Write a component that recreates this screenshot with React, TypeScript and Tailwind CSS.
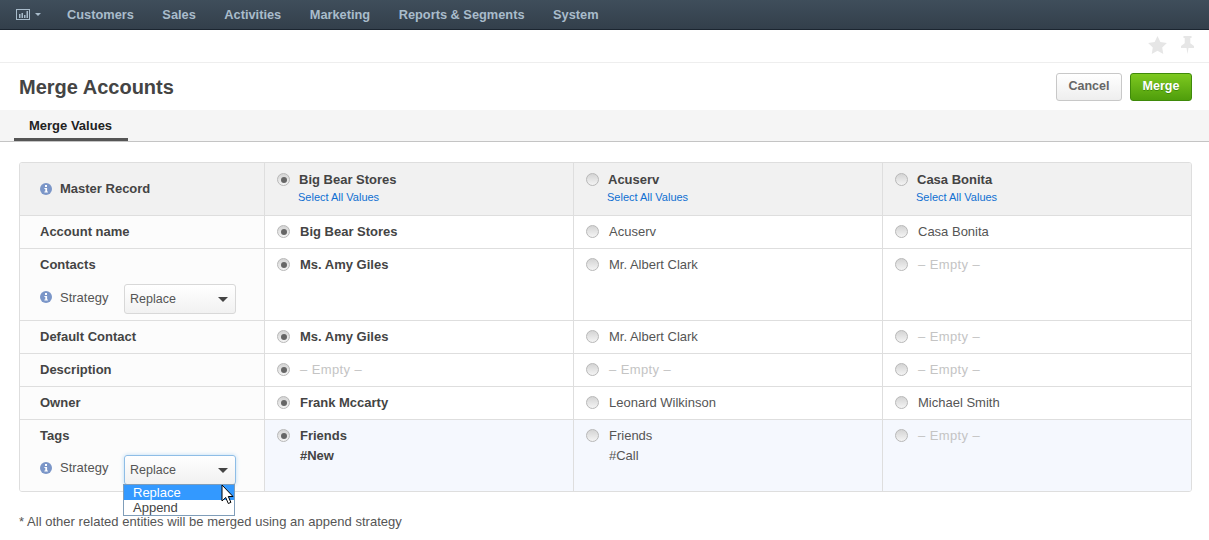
import React from 'react';

const navItems = ['Customers', 'Sales', 'Activities', 'Marketing', 'Reports & Segments', 'System'];

const Radio = ({ checked }: { checked?: boolean }) => (
  <span className="mt-[1px] flex h-[13px] w-[13px] shrink-0 items-center justify-center rounded-full border border-[#b8b8b8] bg-gradient-to-b from-[#d4d4d4] to-[#f4f4f4]">
    {checked && <span className="h-[6px] w-[6px] rounded-full bg-[#666]" />}
  </span>
);

const InfoIcon = () => (
  <svg width="12" height="12" viewBox="0 0 12 12" className="shrink-0">
    <circle cx="6" cy="6" r="6" fill="#7b96c8" />
    <rect x="5" y="2" width="2" height="2" fill="#fff" />
    <path d="M4.4 5h2.7v3.4h.8V9.5H4.4V8.4h.9V6.1h-.9z" fill="#fff" />
  </svg>
);

const Caret = () => <span className="h-0 w-0 border-x-[5px] border-t-[5px] border-x-transparent border-t-[#444]" />;

const Strategy = ({ focused }: { focused?: boolean }) => (
  <div className="mt-[9px] flex items-start pl-[20px]">
    <span className="mt-[7px]"><InfoIcon /></span>
    <span className={`ml-[8px] w-[64px] text-[#555] ${focused ? 'mt-[3px]' : 'mt-[4px]'}`}>Strategy</span>
    <div className={`flex h-[30px] w-[112px] items-center justify-between rounded-[3px] border bg-gradient-to-b from-white to-[#f1f1f1] pl-[5px] pr-[7px] text-[12.5px] text-[#555] ${focused ? 'border-[#8ebde6] shadow-[0_0_4px_#bcdcf5]' : 'border-[#d8d8d8]'}`}>
      Replace
      <Caret />
    </div>
  </div>
);

const Empty = () => <span className="tracking-[0.4px] text-[#c4c4c4]">– Empty –</span>;

interface CellProps {
  checked?: boolean;
  children: React.ReactNode;
  tint?: boolean;
  last?: boolean;
}

const Cell = ({ checked, children, tint, last }: CellProps) => (
  <div className={`flex gap-[10px] border-l border-[#dedede] pl-[12px] pt-[6px] ${tint ? 'bg-[#f5f8fe]' : ''} ${last ? '' : 'border-b'}`}>
    <span className="pt-[2px]"><Radio checked={checked} /></span>
    <div className="leading-[20px]">{children}</div>
  </div>
);

const Label = ({ children, last }: { children: React.ReactNode; last?: boolean }) => (
  <div className={`bg-[#fcfcfc] pt-[6px] leading-[20px] ${last ? '' : 'border-b border-[#dedede]'}`}>
    {children}
  </div>
);

const Head = ({ name, checked }: { name: string; checked?: boolean }) => (
  <div className="flex gap-[9px] border-b border-l border-[#dedede] bg-[#f1f1f1] pl-[12px] pt-[8px]">
    <span className="pt-[1px]"><Radio checked={checked} /></span>
    <div>
      <div className="text-[13px] font-bold leading-[18px] text-[#444]">{name}</div>
      <a className="-ml-px block text-[11px] leading-[16px] text-[#0f6fd1]">Select All Values</a>
    </div>
  </div>
);

const B = ({ children }: { children: React.ReactNode }) => <span className="font-bold text-[#444]">{children}</span>;
const P = ({ children }: { children: React.ReactNode }) => <span className="text-[#555]">{children}</span>;

export default function App() {
  return (
    <div className="relative h-[540px] w-[1209px] overflow-hidden bg-white font-['Liberation_Sans',Arial,sans-serif] text-[13px] text-[#444]">
      <nav className="flex h-[30px] items-center border-b border-[#1b2530] bg-gradient-to-b from-[#3f4e5b] to-[#333f4b] pl-[16px]">
        <svg width="14" height="13" viewBox="0 0 14 13" className="shrink-0">
          <rect x="0.5" y="1.5" width="13" height="10" fill="none" stroke="#a9bccb" />
          <path d="M3 6h1.5v4H3zM5.5 5H7v5H5.5zM8 7h1.5v3H8zM10.5 3H12v7h-1.5z" fill="#a9bccb" />
        </svg>
        <span className="ml-[5px] h-0 w-0 border-x-[3px] border-t-[3px] border-x-transparent border-t-[#a9bccb]" />
        <div className="ml-[26px] flex gap-[28.5px] text-[12.8px] font-bold text-[#a9bccb]">
          {navItems.map((item) => (
            <span key={item}>{item}</span>
          ))}
        </div>
      </nav>

      <div className="flex h-[33px] items-center justify-end gap-[14px] border-b border-[#eeeeee] pb-[2px] pr-[15px]">
        <svg width="19" height="18" viewBox="0 0 24 23"><path d="M12 0l3.7 7.6 8.3 1.2-6 5.9 1.4 8.3L12 19l-7.4 4L6 14.7 0 8.8l8.3-1.2z" fill="#e6e6e6" /></svg>
        <svg width="13" height="18" viewBox="0 0 13 18" preserveAspectRatio="none"><path d="M2.5 0h8v2H9.3v5.2L13 10v2H7.5l-1 6-1-6H0v-2l3.7-2.8V2H2.5z" fill="#e6e6e6" /></svg>
      </div>

      <div className="flex h-[47px] items-center justify-between pl-[19px] pr-[17px]">
        <h1 className="text-[20px] font-bold text-[#444]">Merge Accounts</h1>
        <div className="flex gap-[8px]">
          <button className="h-[28px] w-[66px] rounded-[3px] border border-[#c8c8c8] bg-gradient-to-b from-white to-[#eeeeee] text-[12.5px] font-bold text-[#666]">Cancel</button>
          <button className="h-[28px] w-[62px] rounded-[3px] border border-[#3f8a0a] bg-gradient-to-b from-[#7dc91f] to-[#4f9e0b] text-[12.5px] font-bold text-white [text-shadow:0_1px_0_#3f8a0a]">Merge</button>
        </div>
      </div>

      <div className="h-[32px] border-b border-[#c4c4c4] bg-[#f5f5f5] pl-[14px]">
        <div className="h-[31px] w-[114px] border-b-[3px] border-[#555] pl-[15px] pt-[8px] text-[13px] font-bold leading-[16px] text-[#222]">Merge Values</div>
      </div>

      <div className="mx-[19px] mt-[20px] grid w-[1173px] grid-cols-[244px_309px_309px_309px] grid-rows-[53px_33px_72px_33px_33px_33px_71px] overflow-hidden rounded-[3px] border border-[#dedede]">
        <div className="flex items-center gap-[8px] border-b border-[#dedede] bg-[#f1f1f1] pl-[20px] font-bold"><InfoIcon />Master Record</div>
        <Head name="Big Bear Stores" checked />
        <Head name="Acuserv" />
        <Head name="Casa Bonita" />

        <Label><span className="pl-[20px] font-bold">Account name</span></Label>
        <Cell checked><B>Big Bear Stores</B></Cell>
        <Cell><P>Acuserv</P></Cell>
        <Cell><P>Casa Bonita</P></Cell>

        <Label>
          <span className="pl-[20px] font-bold">Contacts</span>
          <Strategy />
        </Label>
        <Cell checked><B>Ms. Amy Giles</B></Cell>
        <Cell><P>Mr. Albert Clark</P></Cell>
        <Cell><Empty /></Cell>

        <Label><span className="pl-[20px] font-bold">Default Contact</span></Label>
        <Cell checked><B>Ms. Amy Giles</B></Cell>
        <Cell><P>Mr. Albert Clark</P></Cell>
        <Cell><Empty /></Cell>

        <Label><span className="pl-[20px] font-bold">Description</span></Label>
        <Cell checked><Empty /></Cell>
        <Cell><Empty /></Cell>
        <Cell><Empty /></Cell>

        <Label><span className="pl-[20px] font-bold">Owner</span></Label>
        <Cell checked><B>Frank Mccarty</B></Cell>
        <Cell><P>Leonard Wilkinson</P></Cell>
        <Cell><P>Michael Smith</P></Cell>

        <Label last>
          <span className="pl-[20px] font-bold">Tags</span>
          <Strategy focused />
        </Label>
        <Cell checked tint last><B>Friends<br />#New</B></Cell>
        <Cell tint last><P>Friends<br />#Call</P></Cell>
        <Cell tint last><Empty /></Cell>
      </div>

      <p className="ml-[19px] mt-[22px] text-[13px] leading-[16px] tracking-[0.03px] text-[#555]">* All other related entities will be merged using an append strategy</p>

      {/* open select dropdown + cursor sit over the table */}
      <div className="absolute left-[123px] top-[484px] w-[112px] border border-[#7f9db9] bg-white text-[13px] leading-[15px] text-[#444]">
        <div className="bg-[#3399ff] pl-[9px] text-white">Replace</div>
        <div className="pl-[9px]">Append</div>
      </div>
      <svg width="14" height="21" viewBox="0 0 14 21" className="absolute left-[221px] top-[484px]">
        <path d="M1 1v16l3.7-3.5 2.6 6 2.6-1.1-2.6-5.9H12z" fill="#fff" stroke="#000" strokeWidth="1" />
      </svg>
    </div>
  );
}
